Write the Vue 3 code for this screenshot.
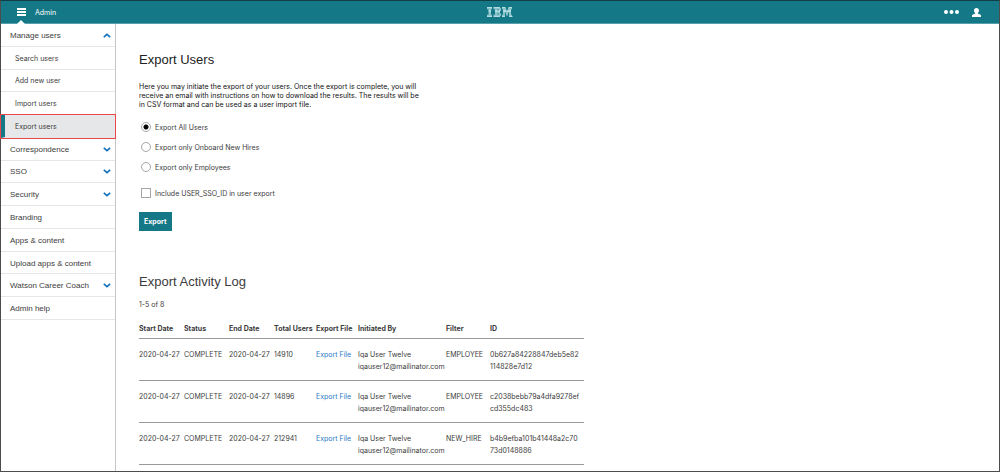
<script setup>
import { ref } from 'vue'

const menu = [
  { label: 'Manage users', open: true },
  { label: 'Search users', sub: true },
  { label: 'Add new user', sub: true },
  { label: 'Import users', sub: true },
  { label: 'Export users', sub: true, active: true },
  { label: 'Correspondence', group: true },
  { label: 'SSO', group: true },
  { label: 'Security', group: true },
  { label: 'Branding' },
  { label: 'Apps & content' },
  { label: 'Upload apps & content' },
  { label: 'Watson Career Coach', group: true },
  { label: 'Admin help' },
]

const scopes = [
  { value: 'all', label: 'Export All Users' },
  { value: 'hires', label: 'Export only Onboard New Hires' },
  { value: 'employees', label: 'Export only Employees' },
]
const scope = ref('all')
const includeSso = ref(false)

const columns = ['Start Date', 'Status', 'End Date', 'Total Users', 'Export File', 'Initiated By', 'Filter', 'ID']
const rows = [
  { total: '14910', filter: 'EMPLOYEE', id: ['0b627a84228847deb5e82', '114828e7d12'] },
  { total: '14896', filter: 'EMPLOYEE', id: ['c2038bebb79a4dfa9278ef', 'cd355dc483'] },
  { total: '212941', filter: 'NEW_HIRE', id: ['b4b9efba101b41448a2c70', '73d0148886'] },
]
</script>

<template>
  <div class="app">
    <header class="bar">
      <div class="start">
        <button class="burger" type="button" aria-label="Menu">
          <svg width="9" height="8" viewBox="0 0 9 8" fill="#fff"><path d="M0 0h9v2H0zM0 3h9v2H0zM0 6h9v2H0z" /></svg>
        </button>
        <span class="title">Admin</span>
      </div>
      <svg class="logo" width="26" height="10" viewBox="0 0 52 20" fill="none" stroke="#b4dde2" stroke-width="2.2" role="img" aria-label="IBM">
        <path d="M0 1h10M13 1h13M30 1h7M43 1h7M0 3.6h10M13 3.6h15M30 3.6h8M42 3.6h8M3 6.2h5M16 6.2h5M23 6.2h5M32 6.2h7M41 6.2h7M3 8.8h5M16 8.8h10M32 8.8h16M3 11.4h5M16 11.4h10M32 11.4h4M37 11.4h6M44 11.4h4M3 14h5M16 14h5M23 14h5M32 14h4M38 14h4M44 14h4M0 16.6h10M13 16.6h15M30 16.6h6M39 16.6h2M44 16.6h6M0 19h10M13 19h13M30 19h6M44 19h6M51 19h1" />
      </svg>
      <div class="tools">
        <button type="button" aria-label="More">
          <svg width="15" height="4" viewBox="0 0 15 4" fill="#fff"><circle cx="2" cy="2" r="2" /><circle cx="7.5" cy="2" r="2" /><circle cx="13" cy="2" r="2" /></svg>
        </button>
        <button type="button" aria-label="Profile">
          <svg width="9" height="9" viewBox="0 0 9 9" fill="#fff"><path d="M4.500 0C6.200 0 7 1 7 2.400c0 1-.5 1.900-1.100 2.500v.9l2.300.7c.5.200.8.600.8 1.200V9H0V7.700c0-.6.300-1 .8-1.200l2.300-.7v-.9C2.500 4.300 2 3.400 2 2.400 2 1 2.800 0 4.500 0z" /></svg>
        </button>
      </div>
    </header>

    <div class="body">
      <aside class="side">
        <nav class="menu" aria-label="Admin">
          <a v-for="m in menu" :key="m.label" href="#" :class="['item', { sub: m.sub, active: m.active }]">
            <span>{{ m.label }}</span>
            <svg v-if="m.open || m.group" :class="{ up: m.open }" width="8" height="5" viewBox="0 0 8 5" fill="none" stroke="#1272bd" stroke-width="1.6"><path d="M.8.8 4 3.700 7.200.8" /></svg>
          </a>
        </nav>
      </aside>

      <main class="main">
        <h1>Export Users</h1>
        <p class="intro">Here you may initiate the export of your users. Once the export is complete, you will receive an email with instructions on how to download the results. The results will be in CSV format and can be used as a user import file.</p>
        <form @submit.prevent>
          <div class="radios">
            <label v-for="s in scopes" :key="s.value">
              <input v-model="scope" type="radio" name="scope" :value="s.value" />
              <span>{{ s.label }}</span>
            </label>
          </div>
          <label class="check">
            <input v-model="includeSso" type="checkbox" />
            <span>Include USER_SSO_ID in user export</span>
          </label>
          <button class="export" type="submit">Export</button>
        </form>

        <h2>Export Activity Log</h2>
        <p class="count">1-5 of 8</p>
        <table>
          <colgroup>
            <col v-for="(c, i) in columns" :key="c" :class="'c' + i" />
          </colgroup>
          <thead>
            <tr><th v-for="c in columns" :key="c" scope="col">{{ c }}</th></tr>
          </thead>
          <tbody>
            <tr v-for="r in rows" :key="r.total">
              <td>2020-04-27</td>
              <td>COMPLETE</td>
              <td>2020-04-27</td>
              <td>{{ r.total }}</td>
              <td><a href="#">Export File</a></td>
              <td>Iqa User Twelve<br />iqauser12@mailinator.com</td>
              <td>{{ r.filter }}</td>
              <td>{{ r.id[0] }}<br />{{ r.id[1] }}</td>
            </tr>
          </tbody>
        </table>
      </main>
    </div>
  </div>
</template>

<style>
body {
  background: #fff;
}
</style>

<style scoped>
* {
  box-sizing: border-box;
}
.app {
  display: flex;
  flex-direction: column;
  min-height: 100vh;
  border: 1px solid #4c4c4c;
  border-top-color: #123f47;
  color: #3c3c3c;
  font-family: "Liberation Sans", Arial, sans-serif;
  font-size: 7px;
}
button {
  padding: 0;
  border: 0;
  background: none;
  font: inherit;
}
svg {
  display: block;
}
.bar {
  display: grid;
  grid-template-columns: 1fr auto 1fr;
  align-items: center;
  height: 23px;
  background: #147886;
  border-bottom: 1px solid #55a0ab;
  color: #fff;
}
.start {
  display: flex;
  align-items: center;
  gap: 9px;
  padding-left: 16px;
}
.burger {
  position: relative;
  height: 22px;
}
.burger::after {
  content: "";
  position: absolute;
  left: 0;
  bottom: -1px;
  border: 4px solid transparent;
  border-top: 0;
  border-bottom-color: #fff;
}
.title {
  font-family: Inter, "Liberation Sans", sans-serif;
}
.tools {
  display: flex;
  align-items: center;
  justify-content: flex-end;
  gap: 13px;
  padding-right: 18px;
}
.body {
  display: flex;
  flex: 1;
}
.side {
  flex: none;
  width: 115px;
  border-right: 1px solid #c6c6c6;
}
.menu {
  display: grid;
  grid-template-rows: repeat(13, 1fr);
  height: 296px;
}
.item {
  display: flex;
  align-items: center;
  justify-content: space-between;
  padding: 1px 4px 0 9px;
  border-bottom: 1px solid #e6e6e6;
  color: #3c3c3c;
  font-size: 8px;
  text-decoration: none;
  white-space: nowrap;
}
.sub {
  padding-left: 14px;
  font-family: Inter, "Liberation Sans", sans-serif;
  font-size: 7px;
}
.active {
  padding-left: 10px;
  border-left: 4px solid #147886;
  background: #e6e7e8;
  outline: 1px solid #e8484b;
}
.up {
  transform: rotate(180deg);
}
.main {
  flex: 1;
  min-width: 0;
  padding: 28px 24px 4px 23px;
}
h1,
h2,
p {
  margin: 0;
  font-weight: 400;
}
h1 {
  color: #222;
  font-size: 13px;
  line-height: 16px;
}
.intro {
  max-width: 285px;
  margin-top: 14px;
  color: #111;
  line-height: 9px;
}
.radios {
  display: grid;
  gap: 8px;
  margin-top: 12px;
}
.intro,
form,
.count,
table {
  font-family: Inter, "Liberation Sans", sans-serif;
}
label {
  display: flex;
  align-items: center;
  gap: 4px;
  padding-left: 2px;
  height: 12px;
}
input {
  appearance: none;
  flex: none;
  width: 10px;
  height: 10px;
  margin: 0;
  border: 1px solid #a6a6a6;
  background: #fff;
}
input[type="radio"] {
  border-radius: 50%;
}
input[type="radio"]:checked {
  background: radial-gradient(circle, #000 2px, #fff 3px);
}
.check {
  margin-top: 14px;
}
.export {
  display: block;
  height: 19px;
  margin-top: 13px;
  padding: 0 5px;
  background: #147886;
  color: #fff;
  font-weight: 700;
}
h2 {
  margin-top: 42px;
  font-size: 13px;
  line-height: 18px;
}
.count {
  margin-top: 9px;
  line-height: 10px;
}
table {
  width: 445px;
  margin-top: 13px;
  border-collapse: collapse;
  table-layout: fixed;
}
.c0,
.c1,
.c2 {
  width: 45px;
}
.c3,
.c4 {
  width: 42px;
}
.c5 {
  width: 88px;
}
.c6 {
  width: 44px;
}
th,
td {
  padding: 0;
  border-bottom: 1px solid #999;
  text-align: left;
  vertical-align: top;
  white-space: nowrap;
}
th {
  height: 15px;
  line-height: 11px;
}
td {
  height: 42px;
  padding-top: 10px;
  line-height: 12px;
}
td a {
  color: #2a7ac6;
  text-decoration: none;
}
</style>
